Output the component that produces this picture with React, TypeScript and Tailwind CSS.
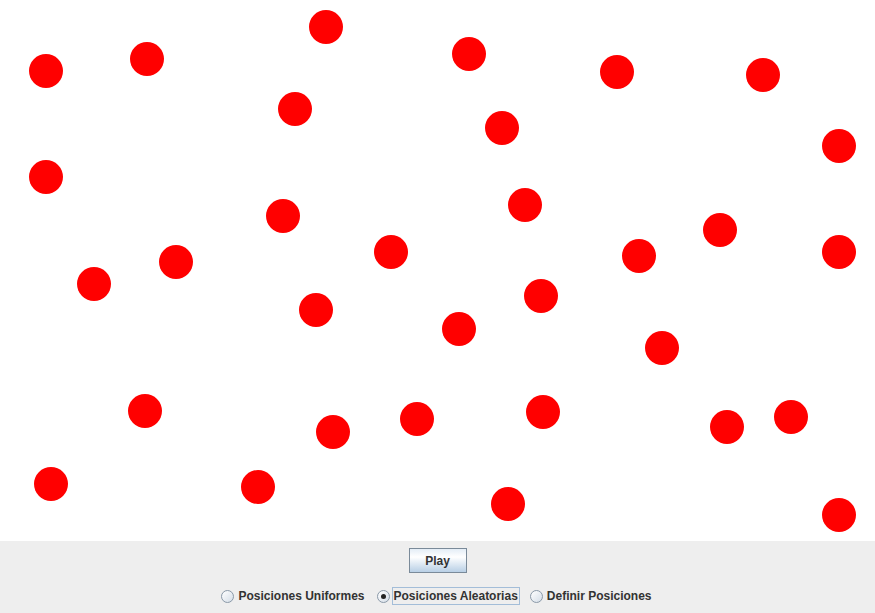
import React from "react";

// posiciones (esquina superior izquierda) de cada círculo en el lienzo
const circles: [number, number][] = [
  [29, 54], [130, 42], [278, 92], [29, 160], [266, 199], [159, 245],
  [309, 10], [452, 37], [485, 111], [508, 188], [374, 235],
  [600, 55], [746, 58], [822, 129], [703, 213], [622, 239], [822, 235],
  [77, 267], [128, 394], [34, 467], [241, 470],
  [299, 293], [442, 312], [524, 279], [316, 415], [400, 402], [526, 395], [491, 487],
  [645, 331], [710, 410], [774, 400], [822, 498],
];

const options = ["Posiciones Uniformes", "Posiciones Aleatorias", "Definir Posiciones"];

const Radio: React.FC<{ label: string; checked: boolean }> = ({ label, checked }) => (
  <div className="flex items-center">
    <span className="w-[13px] h-[13px] rounded-full border border-[#8a99a8] bg-linear-to-br from-white to-[#d4dde7] flex items-center justify-center">
      {checked && <span className="w-[5px] h-[5px] rounded-full bg-[#222]" />}
    </span>
    <span
      className={`ml-[2px] px-[1px] h-[18px] flex items-center border ${
        checked ? "border-[#a3bdd8]" : "border-transparent"
      }`}
    >
      {label}
    </span>
  </div>
);

export default function App() {
  return (
    <div className="w-[875px] h-[613px] flex flex-col font-['Liberation_Sans',Arial,sans-serif]">
      {/* lienzo */}
      <div className="relative h-[541px] bg-white overflow-hidden">
        {circles.map(([x, y], i) => (
          <div
            key={i}
            className="absolute w-[34px] h-[34px] rounded-full bg-[#ff0000]"
            style={{ left: x, top: y }}
          />
        ))}
      </div>

      {/* panel de controles */}
      <div className="h-[72px] bg-[#eeeeee] flex flex-col items-center pt-[7px] text-[12px] font-bold text-[#333333]">
        <button className="w-[58px] h-[25px] border border-[#7a8a99] bg-linear-to-b from-[#e4edf6] via-white via-[35%] to-[#b8cfe5] text-[#333333] text-[12px] font-bold">
          Play
        </button>
        <div className="mt-[14px] flex items-center gap-[10px]">
          {options.map((o, i) => (
            <Radio key={o} label={o} checked={i === 1} />
          ))}
        </div>
      </div>
    </div>
  );
}
